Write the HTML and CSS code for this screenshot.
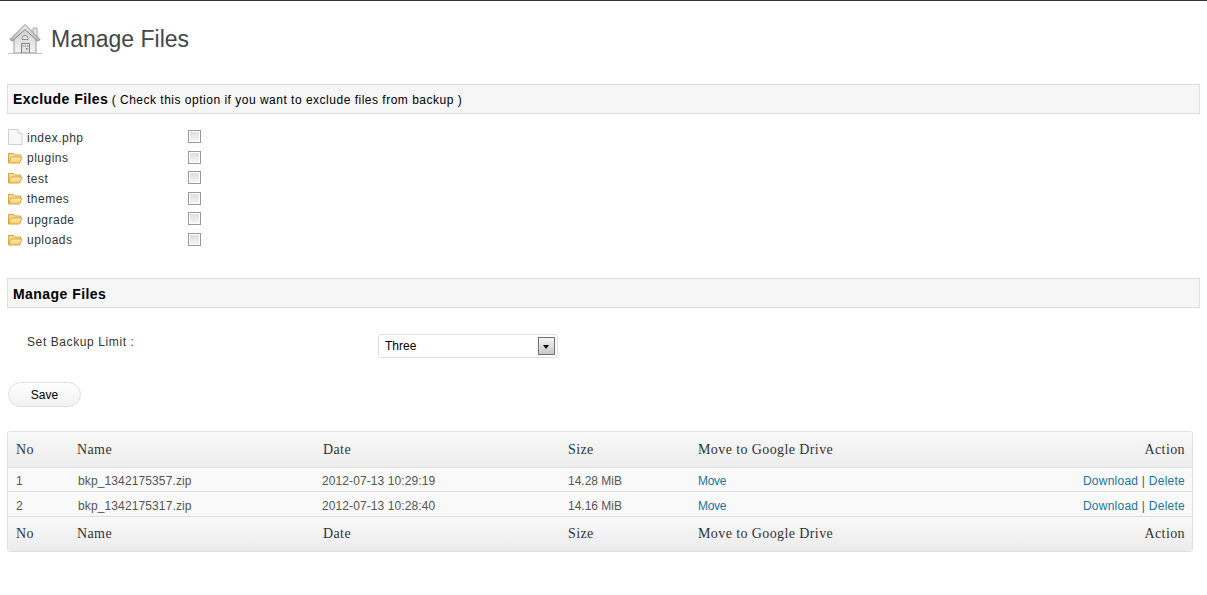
FILE: index.html
```html
<!DOCTYPE html>
<html lang="en">
<head>
  <meta charset="UTF-8" />
  <title>Manage Files</title>
  <link rel="stylesheet" href="styles.css">
</head>
<body>
  <div class="wrap">
    <div class="page-title">
      <svg class="home-icon" width="34" height="32" viewBox="0 0 34 32">
        <defs>
          <linearGradient id="roof" x1="0" y1="0" x2="0" y2="1">
            <stop offset="0" stop-color="#f4f4f4"/>
            <stop offset="1" stop-color="#b4b4b4"/>
          </linearGradient>
          <linearGradient id="wall" x1="0" y1="0" x2="0" y2="1">
            <stop offset="0" stop-color="#cfcfcf"/>
            <stop offset="1" stop-color="#f4f4f4"/>
          </linearGradient>
        </defs>
        <path d="M25 5h4v10l-4-3z" fill="#e6e6e6" stroke="#a8a8a8"/>
        <path d="M6 15v15h22V15L17 6z" fill="url(#wall)" stroke="#9a9a9a"/>
        <path d="M2 16.500 17 1.500l15 15-2.500 1.500L17 6.500 4.500 18z" fill="url(#roof)" stroke="#8c8c8c" stroke-linejoin="round"/>
        <path d="M14 15.500a3 3 0 0 1 6 0v1h-6z" fill="#eee" stroke="#8c8c8c"/>
        <path d="M13.500 20.500h8v9.500h-8z" fill="#e4e4e4" stroke="#808080"/>
        <path d="M13.500 23h8" stroke="#a0a0a0"/>
        <rect x="18" y="25" width="1.500" height="1.500" fill="#777"/>
        <path d="M0 30.500h34" stroke="#c4c4c4"/>
      </svg>
      <h2>Manage Files</h2>
    </div>

    <h3 class="section-bar"><b>Exclude Files</b> <span>( Check this option if you want to exclude files from backup )</span></h3>
    <ul class="file-list">
      <li>
        <svg class="file-icon" width="16" height="16" viewBox="0 0 16 16"><path d="M.5.5h9.500l4 4v11H.5z" fill="#f8f8f8" stroke="#d0d0d0"/><path d="M10 .5v4h4" fill="#eee" stroke="#d8d8d8"/></svg>
        <span class="file-name">index.php</span><input type="checkbox" class="check">
      </li>
      <li>
        <svg class="file-icon" width="16" height="16" viewBox="0 0 16 16"><use href="#folder"/></svg>
        <span class="file-name">plugins</span><input type="checkbox" class="check">
      </li>
      <li>
        <svg class="file-icon" width="16" height="16" viewBox="0 0 16 16"><use href="#folder"/></svg>
        <span class="file-name">test</span><input type="checkbox" class="check">
      </li>
      <li>
        <svg class="file-icon" width="16" height="16" viewBox="0 0 16 16"><use href="#folder"/></svg>
        <span class="file-name">themes</span><input type="checkbox" class="check">
      </li>
      <li>
        <svg class="file-icon" width="16" height="16" viewBox="0 0 16 16"><use href="#folder"/></svg>
        <span class="file-name">upgrade</span><input type="checkbox" class="check">
      </li>
      <li>
        <svg class="file-icon" width="16" height="16" viewBox="0 0 16 16"><use href="#folder"/></svg>
        <span class="file-name">uploads</span><input type="checkbox" class="check">
      </li>
    </ul>

    <h3 class="section-bar bar-manage"><b>Manage Files</b></h3>
    <div class="limit-row">
      <label class="limit-label" for="limit">Set Backup Limit :</label>
      <div class="select-box">
        <select id="limit">
          <option>One</option>
          <option>Two</option>
          <option selected>Three</option>
        </select>
        <span class="select-arrow"></span>
      </div>
    </div>

    <button class="save-btn">Save</button>

    <table class="backups">
      <thead>
        <tr>
          <th class="col-no">No</th>
          <th class="col-name">Name</th>
          <th class="col-date">Date</th>
          <th class="col-size">Size</th>
          <th class="col-move">Move to Google Drive</th>
          <th class="col-action">Action</th>
        </tr>
      </thead>
      <tbody>
        <tr class="row-one">
          <td>1</td>
          <td class="cell-name">bkp_1342175357.zip</td>
          <td class="cell-date">2012-07-13 10:29:19</td>
          <td>14.28 MiB</td>
          <td class="cell-move"><a href="#">Move</a></td>
          <td class="col-action cell-action"><a href="#">Download</a> | <a href="#">Delete</a></td>
        </tr>
        <tr class="row-two">
          <td>2</td>
          <td class="cell-name">bkp_1342175317.zip</td>
          <td class="cell-date">2012-07-13 10:28:40</td>
          <td>14.16 MiB</td>
          <td class="cell-move"><a href="#">Move</a></td>
          <td class="col-action cell-action"><a href="#">Download</a> | <a href="#">Delete</a></td>
        </tr>
      </tbody>
      <tfoot>
        <tr>
          <th>No</th>
          <th>Name</th>
          <th>Date</th>
          <th>Size</th>
          <th>Move to Google Drive</th>
          <th class="col-action">Action</th>
        </tr>
      </tfoot>
    </table>
  </div>

  <svg class="defs" width="0" height="0">
    <defs>
      <linearGradient id="folderFill" x1="0" y1="0" x2="0" y2="1">
        <stop offset="0" stop-color="#fff3c4"/>
        <stop offset="1" stop-color="#f8c95c"/>
      </linearGradient>
      <g id="folder">
        <path d="M.5 13V3.500h5l1 1.500h6v2" fill="#f7dc94" stroke="#dca23c"/>
        <path d="M.5 13l2.500-6h11l-2.500 6z" fill="url(#folderFill)" stroke="#dca23c" stroke-linejoin="round"/>
      </g>
    </defs>
  </svg>
</body>
</html>
```
FILE: styles.css
```css
body { margin: 0; background: #fff; color: #333; font-family: "Liberation Sans", Arial, sans-serif; font-size: 12px; border-top: 1px solid #333; }
.defs { position: absolute; }
.wrap { padding: 0 7px; }

.page-title { display: flex; align-items: center; height: 83px; box-sizing: border-box; padding-bottom: 7px; }
.home-icon { margin: 0 9px 0 1px; flex: none; }
.page-title h2 { margin: 0; font-size: 23px; font-weight: normal; color: #464646; }

.section-bar { margin: 0; height: 28px; line-height: 28px; padding-left: 5px; background: #f6f6f6; border: 1px solid #dfdfdf; color: #000; font-size: 12px; font-weight: normal; width: 1186px; }
.section-bar b { font-size: 14px; letter-spacing: 0.45px; }
.section-bar span { letter-spacing: 0.5px; }
.bar-manage { line-height: 30px; }

.file-list { list-style: none; margin: 13px 0 28px; padding: 0; }
.file-list li { display: flex; align-items: center; height: 20.5px; padding-left: 1px; }
.file-icon { flex: none; margin-right: 3px; }
.file-name { width: 161px; letter-spacing: 0.5px; padding-top: 1px; }
.check { appearance: none; width: 13px; height: 13px; margin: -1px 0 0; border: 1px solid #999; background: linear-gradient(#dcdcdc, #f6f6f6); box-shadow: inset 0 0 0 1px #fff; }

.limit-row { display: flex; margin-top: 26px; padding-left: 20px; }
.limit-label { width: 351px; letter-spacing: 0.6px; padding-top: 1px; }
.select-box { position: relative; width: 180px; height: 24px; }
.select-box select { appearance: none; width: 100%; height: 100%; padding: 0 6px; border: 1px solid #dfdfdf; border-radius: 3px; background: #fff; color: #000; font: 12px "Liberation Sans", Arial, sans-serif; }
.select-arrow { position: absolute; top: 3px; right: 3px; width: 17px; height: 18px; box-sizing: border-box; border: 1px solid #707070; background: linear-gradient(#f4f4f4, #c8c8c8); pointer-events: none; }
.select-arrow::after { content: ""; position: absolute; left: 4px; top: 7px; border: 3.500px solid transparent; border-top: 4px solid #000; border-bottom: 0; }

.save-btn { display: block; margin: 24px 0 0 1px; width: 73px; height: 25px; padding: 0; border: 1px solid #dfdfdf; border-radius: 13px; background: linear-gradient(#fff, #f1f1f1); color: #000; font: 12px "Liberation Sans", Arial, sans-serif; }

.backups { margin-top: 24px; width: 1186px; table-layout: fixed; border-collapse: separate; border-spacing: 0; border: 1px solid #dfdfdf; border-radius: 3px; background: #f9f9f9; }
.backups th { height: 34px; padding: 0 8px; box-sizing: border-box; text-align: left; font: normal 14px "Liberation Serif", Georgia, serif; letter-spacing: 0.4px; color: #333; background: linear-gradient(#f9f9f9, #ececec); }
.backups td { padding: 2px 8px 0; border-bottom: 1px solid #dfdfdf; border-top: 1px solid #fff; color: #555; }
.backups thead th { border-bottom: 1px solid #dfdfdf; height: 36px; }
.row-one td { height: 20px; }
.row-two td { height: 21px; }
.backups a { color: #21759b; text-decoration: none; }
.backups .col-action { text-align: right; padding-right: 7px; }
.cell-name { letter-spacing: 0.12px; }
.backups .cell-name { padding-left: 9px; }
.backups .cell-date { padding-left: 7px; letter-spacing: 0.1px; }
.cell-move { letter-spacing: -0.3px; }
.cell-action { letter-spacing: 0.25px; }
.col-no { width: 61px; }
.col-name { width: 246px; }
.col-date { width: 245px; }
.col-size { width: 130px; }
.col-move { width: 200px; }
```
